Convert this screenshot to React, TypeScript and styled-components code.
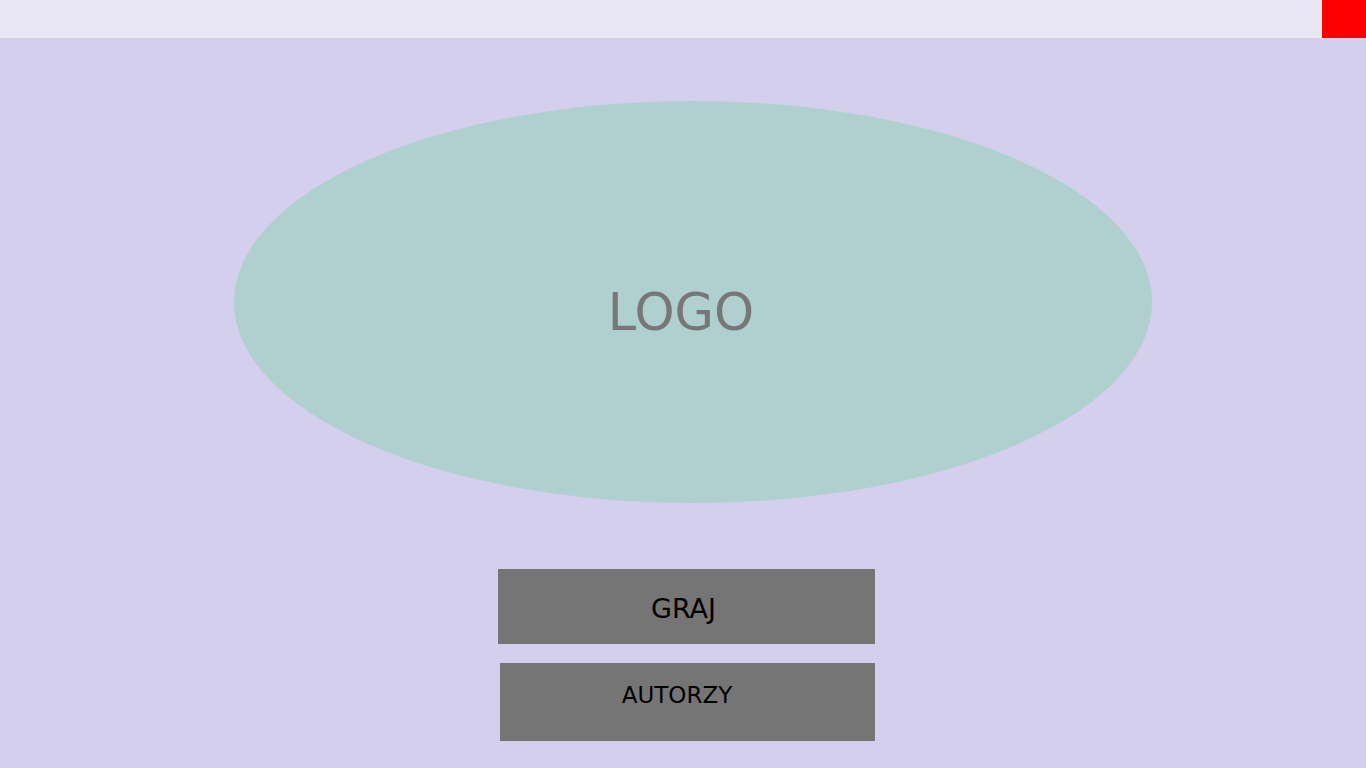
import styled, { createGlobalStyle } from 'styled-components';

const GlobalStyle = createGlobalStyle`
    html, body {
        margin: 0;
        padding: 0;
        background-color: #d3cfec;
        font-family: 'DejaVu Sans', sans-serif;
    }
`;

const Page = styled.div`
    display: flex;
    flex-direction: column;
    width: 1366px;
    height: 768px;
    overflow: hidden;
    background-color: #d3cfec;
`;

const TopBar = styled.header`
    display: flex;
    justify-content: flex-end;
    height: 38px;
    background-color: #e9e7f3;
`;

const CloseBox = styled.button`
    width: 44px;
    height: 38px;
    border: none;
    padding: 0;
    background-color: #ff0000;
`;

const Main = styled.main`
    display: flex;
    flex-direction: column;
    align-items: center;
    padding-top: 63px;
`;

const Logo = styled.div`
    display: flex;
    justify-content: center;
    align-items: center;
    box-sizing: border-box;
    width: 918px;
    height: 402px;
    margin-left: 20px;
    padding: 20px 24px 0 0;
    border-radius: 50%;
    background-color: #b0d0d0;
    color: #777777;
    font-size: 51px;
`;

const Menu = styled.nav`
    display: flex;
    flex-direction: column;
    align-items: flex-end;
    gap: 19px;
    width: 377px;
    margin-top: 66px;
    margin-left: 7px;
`;

const MenuButton = styled.button<{ $w: number; $h: number; $size: number; $top: number; $right: number; $centered?: boolean }>`
    display: flex;
    justify-content: center;
    align-items: ${(p) => (p.$centered ? 'center' : 'flex-start')};
    box-sizing: border-box;
    width: ${(p) => p.$w}px;
    height: ${(p) => p.$h}px;
    padding: ${(p) => `${p.$top}px ${p.$right}px 0 0`};
    border: none;
    background-color: #757575;
    color: #000000;
    font-family: 'DejaVu Sans', sans-serif;
    font-size: ${(p) => p.$size}px;
`;

export default function App() {
    return (
        <>
            <GlobalStyle />
            <Page>
                <TopBar>
                    <CloseBox aria-label="close" />
                </TopBar>
                <Main>
                    <Logo>LOGO</Logo>
                    <Menu>
                        <MenuButton $w={377} $h={75} $size={27} $top={4} $right={6} $centered>
                            GRAJ
                        </MenuButton>
                        <MenuButton $w={375} $h={78} $size={23} $top={19} $right={21}>
                            AUTORZY
                        </MenuButton>
                    </Menu>
                </Main>
            </Page>
        </>
    );
}
